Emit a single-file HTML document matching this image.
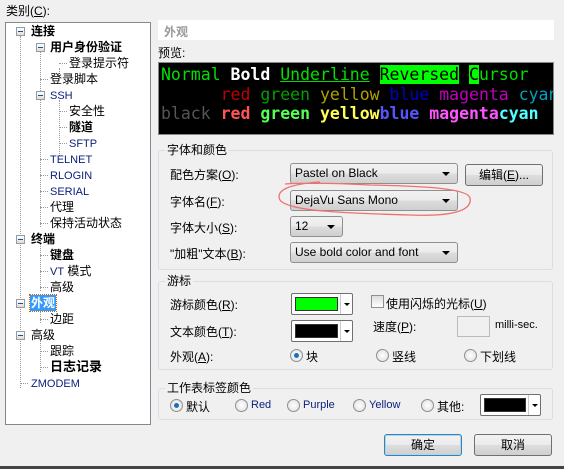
<!DOCTYPE html><html><head><meta charset="utf-8"><style>
*{margin:0;padding:0;box-sizing:border-box}
body{width:564px;height:469px;background:#f0f0f0;position:relative;overflow:hidden;font:12px "Liberation Sans","Noto Sans CJK SC",sans-serif;color:#000}
.a{position:absolute;white-space:nowrap}
.tree{position:absolute;left:5px;top:22px;width:146px;height:403px;background:#fff;border:1px solid #828790}
.ti{position:absolute;white-space:nowrap;font-size:12px;line-height:14px}
.ex{position:absolute;width:9px;height:9px;border:1px solid #999;background:linear-gradient(#fff,#ddd)}
.ex:after{content:"";position:absolute;left:1px;top:3px;width:5px;height:1px;background:#1c4e9a}
.vl{position:absolute;border-left:1px dotted #999;width:0}
.hl{position:absolute;border-top:1px dotted #999;height:0}
.b{font-weight:bold}
.en{color:#0a1e7a;font-size:11px}
.grp{position:absolute;border:1px solid #d5dfe5;border-radius:3px}
.gt{position:absolute;background:#f0f0f0;padding:0 2px;font-size:12px;line-height:14px}
.cb{position:absolute;height:21px;border:1px solid #8e8f8f;border-radius:3px;background:linear-gradient(#f2f2f2 0%,#ebebeb 50%,#dddddd 51%,#cfcfcf 100%);font-size:12px;line-height:19px;padding-left:4px}
.cb:after{content:"";position:absolute;right:7px;top:8px;border-left:4px solid transparent;border-right:4px solid transparent;border-top:4px solid #000}
.btn{position:absolute;height:22px;border:1px solid #707070;border-radius:3px;background:linear-gradient(#f2f2f2 0%,#ebebeb 50%,#dddddd 51%,#cfcfcf 100%);text-align:center;line-height:20px}
.rd{position:absolute;width:13px;height:13px;border-radius:50%;border:1px solid #8f8f8f;background:radial-gradient(#fff,#ddd)}
.rd.on:after{content:"";position:absolute;left:3px;top:3px;width:5px;height:5px;border-radius:50%;background:#1d6fb8}
.cc{position:absolute;height:22px;border:1px solid #707070;border-radius:2px;background:#fff}
.cc i{position:absolute;left:3px;top:3px;bottom:3px;right:14px;border:1px solid #333}
.cc b{position:absolute;right:0;top:0;width:12px;height:20px;border-left:1px solid #ccc}
.cc b:after{content:"";position:absolute;left:3px;top:9px;border-left:3px solid transparent;border-right:3px solid transparent;border-top:3px solid #000}
.pv{position:absolute;left:158px;top:62px;width:396px;height:73px;background:#000;overflow:hidden;font:16.5px "DejaVu Sans Mono",monospace;line-height:19.5px;padding:2px 0 0 2px;border:1px solid #888}
.pv div{white-space:pre}
</style></head><body>
<div class="a" style="left:6px;top:2px">类别(<u>C</u>):</div>
<div class="tree">
<div class="vl" style="left:14px;top:13px;height:352px"></div>
<div class="vl" style="left:34px;top:28px;height:176px"></div>
<div class="vl" style="left:53px;top:45px;height:8px"></div>
<div class="vl" style="left:53px;top:77px;height:56px"></div>
<div class="vl" style="left:34px;top:220px;height:48px"></div>
<div class="vl" style="left:34px;top:285px;height:15px"></div>
<div class="vl" style="left:34px;top:317px;height:32px"></div>
<div class="ex" style="left:10px;top:4px"></div><div class="ti b" style="left:25px;top:1px">连接</div>
<div class="ex" style="left:30px;top:20px"></div><div class="ti b" style="left:44px;top:17px">用户身份验证</div>
<div class="hl" style="left:53px;top:40px;width:8px"></div><div class="ti" style="left:63px;top:33px">登录提示符</div>
<div class="hl" style="left:34px;top:56px;width:8px"></div><div class="ti" style="left:44px;top:49px">登录脚本</div>
<div class="ex" style="left:30px;top:68px"></div><div class="ti en" style="left:44px;top:66px">SSH</div>
<div class="hl" style="left:53px;top:88px;width:8px"></div><div class="ti" style="left:63px;top:81px">安全性</div>
<div class="hl" style="left:53px;top:104px;width:8px"></div><div class="ti b" style="left:63px;top:97px">隧道</div>
<div class="hl" style="left:53px;top:120px;width:8px"></div><div class="ti en" style="left:63px;top:114px">SFTP</div>
<div class="hl" style="left:34px;top:136px;width:8px"></div><div class="ti en" style="left:44px;top:130px">TELNET</div>
<div class="hl" style="left:34px;top:152px;width:8px"></div><div class="ti en" style="left:44px;top:146px">RLOGIN</div>
<div class="hl" style="left:34px;top:168px;width:8px"></div><div class="ti en" style="left:44px;top:162px">SERIAL</div>
<div class="hl" style="left:34px;top:184px;width:8px"></div><div class="ti" style="left:44px;top:177px">代理</div>
<div class="hl" style="left:34px;top:200px;width:8px"></div><div class="ti" style="left:44px;top:193px">保持活动状态</div>
<div class="ex" style="left:10px;top:212px"></div><div class="ti b" style="left:25px;top:209px">终端</div>
<div class="hl" style="left:34px;top:232px;width:8px"></div><div class="ti b" style="left:44px;top:225px">键盘</div>
<div class="hl" style="left:34px;top:248px;width:8px"></div><div class="ti" style="left:44px;top:241px"><span class="en">VT</span> 模式</div>
<div class="hl" style="left:34px;top:264px;width:8px"></div><div class="ti" style="left:44px;top:257px">高级</div>
<div class="ex" style="left:10px;top:276px"></div><div class="ti b" style="left:24px;top:272px;background:#3399ff;color:#fff;padding:1px 1px;outline:1px dotted #c60">外观</div>
<div class="hl" style="left:34px;top:296px;width:8px"></div><div class="ti" style="left:44px;top:289px">边距</div>
<div class="ex" style="left:10px;top:308px"></div><div class="ti" style="left:25px;top:305px">高级</div>
<div class="hl" style="left:34px;top:328px;width:8px"></div><div class="ti" style="left:44px;top:321px">跟踪</div>
<div class="hl" style="left:34px;top:344px;width:8px"></div><div class="ti b" style="left:44px;top:337px;font-size:13px">日志记录</div>
<div class="hl" style="left:14px;top:360px;width:8px"></div><div class="ti en" style="left:25px;top:354px">ZMODEM</div>
</div>
<div class="a" style="left:158px;top:20px;width:396px;height:20px;background:#fff;color:#999;font-weight:bold;padding:3px 6px;font-size:12px">外观</div>
<div class="a" style="left:158px;top:44px">预览:</div>
<div class="pv">
<div><span style="color:#00e000">Normal </span><b style="color:#fff">Bold</b><span style="color:#00e000"> <u>Underline</u> <span style="background:#00ff00;color:#000">Reversed</span> <span style="background:#00ff00;color:#000">C</span>ursor</span></div>
<div>      <span style="color:#c00000">red</span> <span style="color:#00a000">green</span> <span style="color:#b0a000">yellow</span> <span style="color:#0000c0">blue</span> <span style="color:#c000c0">magenta</span> <span style="color:#00a0c0">cyan</span></div>
<div style="font-weight:bold"><span style="color:#555;font-weight:normal">black</span> <span style="color:#ff5555">red</span> <span style="color:#55ff55">green</span> <span style="color:#ffff55">yellow</span><span style="color:#5555ff">blue</span> <span style="color:#ff55ff">magenta</span><span style="color:#55ffff">cyan</span></div>
</div>
<div class="grp" style="left:158px;top:150px;width:395px;height:120px"></div>
<div class="gt" style="left:165px;top:143px">字体和颜色</div>
<div class="a" style="left:170px;top:166px">配色方案(<u>O</u>):</div>
<div class="cb" style="left:290px;top:163px;width:168px">Pastel on Black</div>
<div class="btn" style="left:465px;top:164px;width:78px">编辑(<u>E</u>)...</div>
<div class="a" style="left:170px;top:193px">字体名(<u>F</u>):</div>
<div class="cb" style="left:290px;top:190px;width:168px">DejaVu Sans Mono</div>
<div class="a" style="left:170px;top:219px">字体大小(<u>S</u>):</div>
<div class="cb" style="left:290px;top:216px;width:53px">12</div>
<div class="a" style="left:170px;top:245px">"加粗"文本(<u>B</u>):</div>
<div class="cb" style="left:290px;top:242px;width:168px">Use bold color and font</div>
<svg class="a" style="left:270px;top:178px" width="205" height="40"><path d="M50 4 C 20 6, 5 12, 10 22 C 18 33, 70 35, 140 37 C 190 39, 202 30, 200 20 C 198 10, 150 8, 100 7 C 60 5, 30 5, 15 6" fill="none" stroke="#f07070" stroke-width="1.3"/></svg>
<div class="grp" style="left:158px;top:281px;width:395px;height:89px"></div>
<div class="gt" style="left:165px;top:274px">游标</div>
<div class="a" style="left:170px;top:296px">游标颜色(<u>R</u>):</div>
<div class="cc" style="left:291px;top:293px;width:62px"><i style="background:#00ff00"></i><b></b></div>
<div class="a" style="left:170px;top:323px">文本颜色(<u>T</u>):</div>
<div class="cc" style="left:291px;top:320px;width:62px"><i style="background:#000"></i><b></b></div>
<div class="a" style="left:371px;top:295px;width:13px;height:13px;border:1px solid #8f8f8f;background:linear-gradient(#ddd,#fff)"></div>
<div class="a" style="left:386px;top:295px">使用闪烁的光标(<u>U</u>)</div>
<div class="a" style="left:373px;top:318px">速度(<u>P</u>):</div>
<div class="a" style="left:457px;top:316px;width:33px;height:21px;border:1px solid #bbb;background:#f0f0f0"></div>
<div class="a" style="left:495px;top:319px;font-size:11px">milli-sec.</div>
<div class="a" style="left:170px;top:348px">外观(<u>A</u>):</div>
<div class="rd on" style="left:290px;top:349px"></div><div class="a" style="left:306px;top:348px">块</div>
<div class="rd" style="left:376px;top:349px"></div><div class="a" style="left:392px;top:348px">竖线</div>
<div class="rd" style="left:464px;top:349px"></div><div class="a" style="left:480px;top:348px">下划线</div>
<div class="grp" style="left:158px;top:388px;width:395px;height:32px"></div>
<div class="gt" style="left:165px;top:381px">工作表标签颜色</div>
<div class="rd on" style="left:170px;top:399px"></div><div class="a" style="left:186px;top:398px">默认</div>
<div class="rd" style="left:235px;top:399px"></div><div class="a" style="left:251px;top:399px;font-size:11px;color:#0a1e7a">Red</div>
<div class="rd" style="left:287px;top:399px"></div><div class="a" style="left:303px;top:399px;font-size:11px;color:#0a1e7a">Purple</div>
<div class="rd" style="left:353px;top:399px"></div><div class="a" style="left:369px;top:399px;font-size:11px;color:#0a1e7a">Yellow</div>
<div class="rd" style="left:421px;top:399px"></div><div class="a" style="left:437px;top:398px">其他:</div>
<div class="cc" style="left:480px;top:394px;width:61px"><i style="background:#000"></i><b></b></div>
<div class="btn" style="left:384px;top:434px;width:78px;border-color:#3c7fb1;box-shadow:inset 0 0 0 1px #a8d8f0">确定</div>
<div class="btn" style="left:474px;top:434px;width:78px">取消</div>
<div class="a" style="left:0;top:466px;width:564px;height:3px;background:#444"></div>
</body></html>
